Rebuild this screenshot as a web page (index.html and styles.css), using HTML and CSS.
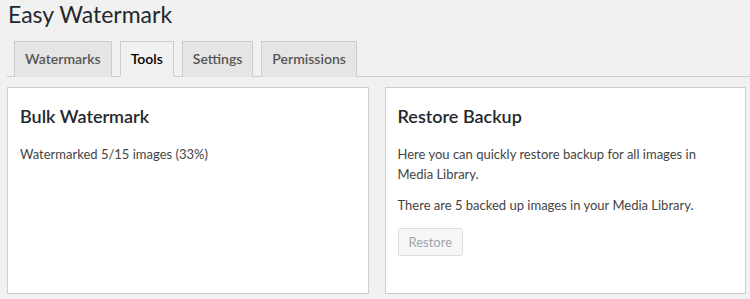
FILE: index.html
```html
<!DOCTYPE html>
<html lang="en">
<head>
  <meta charset="UTF-8">
  <meta name="viewport" content="width=device-width, initial-scale=1.0">
  <title>Easy Watermark</title>
  <link rel="stylesheet" href="styles.css">
</head>
<body>

  <div class="wrap">
    <h1>Easy Watermark</h1>

    <nav class="nav-tabs">
      <a href="#" class="nav-tab">Watermarks</a>
      <a href="#" class="nav-tab active">Tools</a>
      <a href="#" class="nav-tab">Settings</a>
      <a href="#" class="nav-tab">Permissions</a>
    </nav>

    <div class="tools">
      <div class="card">
        <h2>Bulk Watermark</h2>
        <p>Watermarked 5/15 images (33%)</p>
      </div>

      <div class="card">
        <h2>Restore Backup</h2>
        <p>Here you can quickly restore backup for all images in Media Library.</p>
        <p>There are 5 backed up images in your Media Library.</p>
        <p><button type="button" disabled>Restore</button></p>
      </div>
    </div>
  </div>

</body>
</html>
```

FILE: styles.css
```css
body {
  margin: 0;
  background: #f1f1f1;
  color: #444;
  font-family: Lato, "Noto Sans", sans-serif;
  font-size: 13px;
  line-height: 1.5;
}

.wrap {
  padding: 0 4px 0 7px;
}

h1 {
  margin: 0 0 0 1px;
  font-size: 23px;
  font-weight: 400;
  line-height: 1.3;
  color: #23282d;
}

.nav-tabs {
  display: flex;
  gap: 8px;
  margin: 11px -4px 0 0;
  padding-left: 7px;
  border-bottom: 1px solid #ccc;
}

.nav-tab {
  display: block;
  margin-bottom: -1px;
  padding: 5px 10px;
  border: 1px solid #ccc;
  border-bottom: none;
  background: #e5e5e5;
  color: #555;
  font-size: 14px;
  font-weight: 600;
  line-height: 24px;
  text-decoration: none;
}

.nav-tab.active {
  background: #f1f1f1;
  color: #000;
  border-bottom: 1px solid #f1f1f1;
}

.tools {
  display: grid;
  grid-template-columns: 1fr 1fr;
  gap: 16px;
  margin-top: 10px;
}

.card {
  background: #fff;
  border: 1px solid #ccd0d4;
  padding: 16px 12px 25px;
}

.card h2 {
  margin: 0 0 16px;
  font-size: 18px;
  font-weight: 600;
  line-height: 1.4;
  color: #23282d;
}

.card p {
  margin: 12px 0;
}

.card p:last-child {
  margin-bottom: 12px;
}

button {
  height: 28px;
  padding: 0 10px 1px;
  border: 1px solid #ddd;
  border-radius: 3px;
  background: #f7f7f7;
  color: #a0a5aa;
  font-family: inherit;
  font-size: 13px;
  line-height: 26px;
}
```
